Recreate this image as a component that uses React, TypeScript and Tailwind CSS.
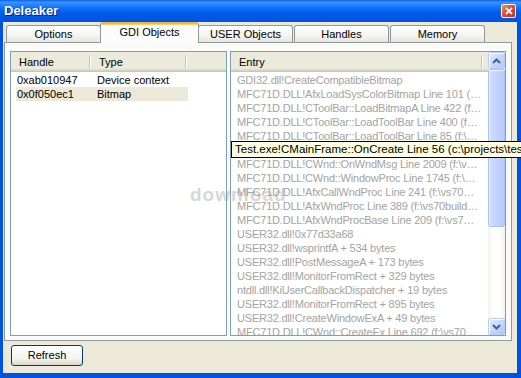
import type { ReactNode } from "react";

const entries = [
  "GDI32.dll!CreateCompatibleBitmap",
  "MFC71D.DLL!AfxLoadSysColorBitmap Line 101 (…",
  "MFC71D.DLL!CToolBar::LoadBitmapA Line 422 (f…",
  "MFC71D.DLL!CToolBar::LoadToolBar Line 400 (f…",
  "MFC71D.DLL!CToolBar::LoadToolBar Line 85 (f:\\…",
  "Test.exe!CMainFrame::OnCreate Line 56 (c:\\pr…",
  "MFC71D.DLL!CWnd::OnWndMsg Line 2009 (f:\\v…",
  "MFC71D.DLL!CWnd::WindowProc Line 1745 (f:\\…",
  "MFC71D.DLL!AfxCallWndProc Line 241 (f:\\vs70…",
  "MFC71D.DLL!AfxWndProc Line 389 (f:\\vs70build…",
  "MFC71D.DLL!AfxWndProcBase Line 209 (f:\\vs7…",
  "USER32.dll!0x77d33a68",
  "USER32.dll!wsprintfA + 534 bytes",
  "USER32.dll!PostMessageA + 173 bytes",
  "USER32.dll!MonitorFromRect + 329 bytes",
  "ntdll.dll!KiUserCallbackDispatcher + 19 bytes",
  "USER32.dll!MonitorFromRect + 895 bytes",
  "USER32.dll!CreateWindowExA + 49 bytes",
  "MFC71D.DLL!CWnd::CreateEx Line 692 (f:\\vs70…",
];

const objects = [
  { handle: "0xab010947", type: "Device context", selected: false },
  { handle: "0x0f050ec1", type: "Bitmap", selected: true },
];

const tabs = ["Options", "GDI Objects", "USER Objects", "Handles", "Memory"];
const activeTab = "GDI Objects";

function HeaderSep() {
  return <div className="my-[3px] h-[14px] w-[2px] shrink-0 border-l border-l-[#c7c5b2] border-r border-r-white" />;
}

function HeaderCell({ width, children }: { width: string; children?: ReactNode }) {
  return (
    <div className={`flex h-full items-center ${width}`}>
      <span className="flex-1 pl-[8px]">{children}</span>
      <HeaderSep />
    </div>
  );
}

function Chevron({ up }: { up?: boolean }) {
  return (
    <svg width="9" height="6" viewBox="0 0 9 6" className={up ? "" : "rotate-180"}>
      <path d="M1 5 L4.5 1.5 L8 5" fill="none" stroke="#4d6185" strokeWidth="2" />
    </svg>
  );
}

function ScrollButton({ up }: { up?: boolean }) {
  return (
    <div className="flex h-[17px] w-[17px] items-center justify-center rounded-[2px] border border-[#b7cbf6] bg-[linear-gradient(135deg,#e4ecfe,#c2d3fc_60%,#b4c8f6)] shadow-[inset_1px_1px_0_#ffffff]">
      <Chevron up={up} />
    </div>
  );
}

export default function App() {
  return (
    <div className="relative flex h-[378px] w-[521px] flex-col overflow-hidden bg-[#0053e1] text-[11px] text-black [font-family:'Liberation_Sans',Arial,sans-serif]">
      {/* Title bar */}
      <div className="flex h-[22px] shrink-0 items-center justify-between bg-[linear-gradient(to_bottom,#0b5fea_0%,#3b93ff_10%,#2385ff_22%,#0a6cf8_40%,#005ce9_60%,#0056e4_85%,#0053df_100%)] pl-[4px] pr-[5px]">
        <span className="text-[13px] font-bold text-white [text-shadow:1px_1px_0_#0a1f8c]">Deleaker</span>
        <div className="flex h-[14px] w-[15px] items-center justify-center rounded-[2px] border border-white bg-[linear-gradient(135deg,#f28d6c,#e0482a_50%,#c8321a)]">
          <svg width="8" height="8" viewBox="0 0 8 8">
            <path d="M1 1 L7 7 M7 1 L1 7" stroke="white" strokeWidth="1.8" />
          </svg>
        </div>
      </div>

      {/* Window body */}
      <div className="flex flex-1 pb-[5px] pl-[3px] pr-[4px]">
        <div className="flex flex-1 flex-col bg-[#ece9d8]">
          {/* Tabs */}
          <div className="relative z-10 flex h-[20px] shrink-0 items-end pl-[3px]">
            {tabs.map((t) =>
              t === activeTab ? (
                <div
                  key={t}
                  className="-mb-[1px] ml-[-2px] mr-[-1px] flex h-[21px] w-[99px] items-center justify-center rounded-t-[3px] border-x border-t-[2px] border-x-[#919b9c] border-t-[#f6b444] bg-[#fcfcfe] pb-[2px] shadow-[inset_0_1px_0_#ffd266]"
                >
                  {t}
                </div>
              ) : (
                <div
                  key={t}
                  className="mr-[1px] flex h-[17px] w-[95px] items-center justify-center rounded-t-[3px] border border-b-0 border-[#919b9c] bg-[linear-gradient(to_bottom,#ffffff,#f4f4f0_60%,#e7e6df)]"
                >
                  {t}
                </div>
              )
            )}
          </div>

          {/* Tab pane */}
          <div className="ml-[1px] mr-[5px] flex h-[299px] shrink-0 gap-[3px] border border-[#919b9c] bg-[#fafaf7] pl-[5px] pt-[8px]">
            {/* Objects list */}
            <div className="flex h-[285px] w-[217px] flex-col overflow-hidden border border-[#7f9db9] bg-white">
              <div className="flex h-[20px] shrink-0 bg-[#ebeadb] shadow-[inset_0_-1px_0_#cbc7b8,inset_0_-2px_0_#d6d2c2,inset_0_-3px_0_#e2decd]">
                <HeaderCell width="w-[80px]">Handle</HeaderCell>
                <HeaderCell width="w-[96px]">Type</HeaderCell>
              </div>
              <div className="pt-[1px]">
                {objects.map((o) => (
                  <div
                    key={o.handle}
                    className={`ml-[5px] flex h-[14px] w-[172px] items-center ${o.selected ? "bg-[#ece9d8]" : ""}`}
                  >
                    <span className="w-[81px] pl-[1px]">{o.handle}</span>
                    <span className="flex-1">{o.type}</span>
                  </div>
                ))}
              </div>
            </div>

            {/* Call stack list */}
            <div className="flex h-[285px] w-[276px] overflow-hidden border border-[#7f9db9] bg-white">
              <div className="flex min-w-0 flex-1 flex-col">
                <div className="flex h-[20px] shrink-0 bg-[#ebeadb] shadow-[inset_0_-1px_0_#cbc7b8,inset_0_-2px_0_#d6d2c2,inset_0_-3px_0_#e2decd]">
                  <HeaderCell width="w-[252px]">Entry</HeaderCell>
                </div>
                <div className="pt-[1px]">
                  {entries.map((e, i) => (
                    <div
                      key={i}
                      className="flex h-[14px] items-center overflow-hidden whitespace-nowrap pl-[6px] tracking-[-0.2px] text-[#a4a3a0]"
                    >
                      {e}
                    </div>
                  ))}
                </div>
              </div>
              <div className="flex w-[17px] shrink-0 flex-col bg-[#fbfbf8]">
                <ScrollButton up />
                <div className="h-[158px] rounded-[2px] border border-[#a9c1f6] bg-[linear-gradient(to_right,#cfdcfd,#c4d4fc_50%,#b9cbf8)] shadow-[inset_1px_1px_0_#eef3ff]" />
                <div className="flex-1 bg-[linear-gradient(to_right,#f3f1ea,#fefefd_30%,#fefefd_70%,#f3f1ea)]" />
                <ScrollButton />
              </div>
            </div>
          </div>

          {/* Footer */}
          <div className="pl-[8px] pt-[4px]">
            <button
              type="button"
              className="flex h-[21px] w-[72px] items-center justify-center rounded-[3px] border border-[#003c74] bg-[linear-gradient(to_bottom,#ffffff,#f3f3ef_70%,#d9d5ca)]"
            >
              Refresh
            </button>
          </div>
        </div>
      </div>

      {/* Watermark */}
      <span className="pointer-events-none absolute left-[190px] top-[181px] text-[19px] font-bold tracking-[1px] text-[#9d9d9d] opacity-40">
        download
      </span>

      {/* Tooltip */}
      <div className="absolute left-[231px] top-[141px] flex h-[17px] items-center whitespace-nowrap border border-black bg-[#ffffe1] px-[3px] text-[11.5px]">
        Test.exe!CMainFrame::OnCreate Line 56 (c:\projects\test leaks\MainFrm.cpp)
      </div>
    </div>
  );
}
